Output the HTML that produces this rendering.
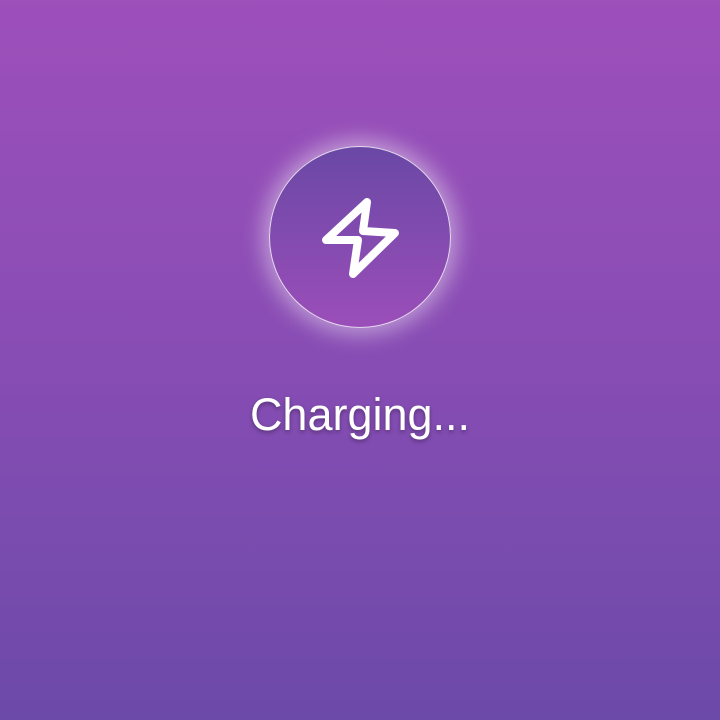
<!DOCTYPE html>
<html><head><style>
html,body{margin:0;padding:0}
body{width:720px;height:720px;overflow:hidden;background:linear-gradient(#9d4fba,#8a4db5 45%,#6c4aa9);font-family:"Liberation Sans",sans-serif;position:relative}
.c{position:absolute;left:269px;top:146px;width:180px;height:180px;border-radius:50%;border:1.5px solid rgba(255,255,255,0.8);background:linear-gradient(#6a48a5,#9b4eb9);box-shadow:0 0 22px 6px rgba(255,255,255,0.45)}
svg{position:absolute;left:0;top:0}
.t{position:absolute;left:0;width:720px;top:389px;text-align:center;color:#fff;font-size:45px;text-shadow:0 2px 4px rgba(0,0,0,0.35)}
</style></head><body>
<div class="c"></div>
<svg width="720" height="720"><path d="M367,202 L326,240 L358,240 L353,274 L395,233 L363,231 Z" fill="none" stroke="#fff" stroke-width="8" stroke-linejoin="round" stroke-linecap="round"/></svg>
<div class="t">Charging...</div>
</body></html>
